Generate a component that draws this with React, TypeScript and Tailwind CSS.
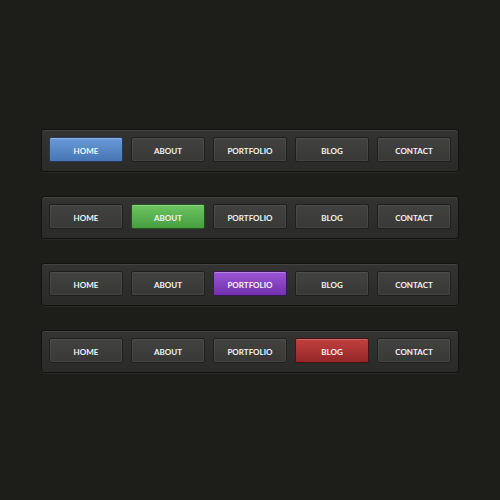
const items = ["HOME", "ABOUT", "PORTFOLIO", "BLOG", "CONTACT"];

const activeStyles = [
  "bg-gradient-to-b from-[#6a9bd8] to-[#4676b5] border-[#233a5c] shadow-[inset_0_1px_0_rgba(255,255,255,0.25)]",
  "bg-gradient-to-b from-[#6cc462] to-[#469f3f] border-[#23501f] shadow-[inset_0_1px_0_rgba(255,255,255,0.25)]",
  "bg-gradient-to-b from-[#9a55d4] to-[#7331ad] border-[#3a1858] shadow-[inset_0_1px_0_rgba(255,255,255,0.25)]",
  "bg-gradient-to-b from-[#c0413f] to-[#952627] border-[#4a1313] shadow-[inset_0_1px_0_rgba(255,255,255,0.2)]",
];

const NavBar = ({ active }: { active: number }) => {
  return (
    <div className="w-[418px] h-[43px] rounded-[3px] border border-[#121210] bg-gradient-to-b from-[#333331] to-[#2a2a28] shadow-[inset_0_1px_0_rgba(255,255,255,0.08),0_1px_0_rgba(255,255,255,0.05)] flex gap-2 pl-[7px] pt-[7px]">
      {items.map((item, i) => (
        <div
          key={item}
          className={
            "w-[74px] h-[25px] rounded-[2px] border flex items-center justify-center pt-[2px] leading-none text-[#f4f4f4] font-bold text-[8px] " +
            (i === active
              ? activeStyles[active]
              : "bg-gradient-to-b from-[#424240] to-[#383836] border-[#1f1f1d] shadow-[inset_0_0_0_1px_rgba(255,255,255,0.06)]")
          }
          style={{ fontFamily: "Lato, 'Open Sans', sans-serif" }}
        >
          {item}
        </div>
      ))}
    </div>
  );
};

export default function App() {
  return (
    <div className="w-[500px] h-[500px] bg-[#1d1d19] flex flex-col items-center justify-center gap-6 pt-[2px]">
      {[0, 1, 2, 3].map((a) => (
        <NavBar key={a} active={a} />
      ))}
    </div>
  );
}
